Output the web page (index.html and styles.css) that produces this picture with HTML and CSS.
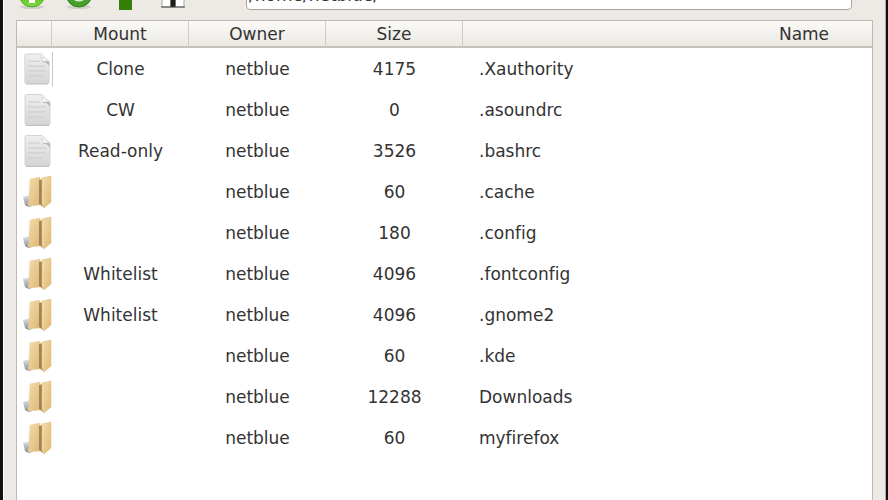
FILE: index.html
```html
<!DOCTYPE html>
<html lang="en">
<head>
    <meta charset="UTF-8">
    <meta name="viewport" content="width=device-width, initial-scale=1.0">
    <title>File Browser</title>
    <link rel="stylesheet" href="styles.css">
</head>
<body>
    <!-- Shared icons -->
    <svg class="sprite" aria-hidden="true">
        <defs>
            <linearGradient id="paper" x1="0" y1="0" x2="0" y2="1">
                <stop offset="0" stop-color="#efefef"/>
                <stop offset="1" stop-color="#d4d4d4"/>
            </linearGradient>
            <linearGradient id="tan" x1="0" y1="0" x2="1" y2="1">
                <stop offset="0" stop-color="#f3dcac"/>
                <stop offset="1" stop-color="#dfb873"/>
            </linearGradient>
            <linearGradient id="steel" x1="0" y1="0" x2="0" y2="1">
                <stop offset="0" stop-color="#e4e4e4"/>
                <stop offset="1" stop-color="#868b91"/>
            </linearGradient>
            <linearGradient id="green" x1="0" y1="0" x2="0" y2="1">
                <stop offset="0" stop-color="#3e9a12"/>
                <stop offset="1" stop-color="#7fdc3c"/>
            </linearGradient>
            <symbol id="file" viewBox="0 0 32 34">
                <path d="M5.500 1.500H21l8 8V30.500q0 1.500-1.500 1.500h-22Q4 32 4 30.500V3Q4 1.500 5.500 1.500z" fill="url(#paper)" stroke="#d4d4d4"/>
                <path d="M7 9h12M7 14h18M7 19h18M7 24h15" stroke="#cbcbcb" fill="none"/>
                <path d="M20 4q3 3 2 6 4-1 7 4V9z" fill="#b4b4b4"/>
                <path d="M20 2q3 3 2 7 4-1 7 1z" fill="#f6f6f6"/>
                <path d="M5 32.500h23" stroke="#bdbdbd"/>
            </symbol>
            <symbol id="folder" viewBox="0 0 32 34">
                <path d="M2 22l7-2 2 11q-4 2-7-1-1-4-2-8z" fill="url(#steel)"/>
                <path d="M9 4l10-2v28l-10 1q-2 0-2-2 2-3 1-8z" fill="url(#tan)" stroke="#ead09c" stroke-width=".5"/>
                <path d="M18 5l4-1v28l-4-3z" fill="#a08657"/>
                <path d="M21 3l9-2V27l-7 6-2-3z" fill="url(#tan)" stroke="#dcb878" stroke-width=".5"/>
                <path d="M22 5v24" stroke="#f3dca8"/>
            </symbol>
        </defs>
    </svg>

    <main class="window">
        <div class="toolbar">
            <button type="button" aria-label="Add">
                <svg viewBox="0 0 32 32">
                    <ellipse cx="16" cy="28" rx="12" ry="2" fill="#d0cec8"/>
                    <circle cx="16" cy="15" r="13" fill="url(#green)" stroke="#55a82b"/>
                    <path d="M13 5h6v6h6v6h-6v7h-6v-7H7v-6h6z" fill="#fff"/>
                </svg>
            </button>
            <button type="button" aria-label="Refresh">
                <svg viewBox="0 0 32 32">
                    <ellipse cx="16" cy="28" rx="12" ry="2" fill="#d0cec8"/>
                    <circle cx="16" cy="15" r="13" fill="#46a02a" stroke="#318018"/>
                    <path d="M11 12q-2 9 5 9 6 0 6-7" fill="none" stroke="#d9f0cf" stroke-width="3"/>
                </svg>
            </button>
            <button type="button" aria-label="Up">
                <svg viewBox="0 0 32 32">
                    <path d="M16 2L4 15h5v16h13V15h6z" fill="#367f08"/>
                </svg>
            </button>
            <button type="button" aria-label="Home">
                <svg viewBox="0 0 32 32">
                    <path d="M5 14L16 3l11 11v14H5z" fill="#fff" stroke="#aaa"/>
                    <path d="M13 13h6v15h-6z" fill="#77736b"/>
                    <path d="M14 13h4v15h-4z" fill="#1c1c18"/>
                    <path d="M4 28h24" stroke="#444"/>
                </svg>
            </button>
            <input class="path" type="text" aria-label="Path" value="/home/netblue/">
        </div>

        <div class="file-list">
            <table>
                <colgroup>
                    <col class="col-icon">
                    <col class="col-data">
                    <col class="col-data">
                    <col class="col-data">
                    <col class="col-name">
                </colgroup>
                <thead>
                    <tr>
                        <th aria-label="Type"></th>
                        <th>Mount</th>
                        <th>Owner</th>
                        <th>Size</th>
                        <th>Name</th>
                    </tr>
                </thead>
                <tbody>
                    <tr class="current">
                        <td><svg><use href="#file"/></svg></td>
                        <td>Clone</td>
                        <td>netblue</td>
                        <td>4175</td>
                        <td>.Xauthority</td>
                    </tr>
                    <tr>
                        <td><svg><use href="#file"/></svg></td>
                        <td>CW</td>
                        <td>netblue</td>
                        <td>0</td>
                        <td>.asoundrc</td>
                    </tr>
                    <tr>
                        <td><svg><use href="#file"/></svg></td>
                        <td>Read-only</td>
                        <td>netblue</td>
                        <td>3526</td>
                        <td>.bashrc</td>
                    </tr>
                    <tr>
                        <td><svg><use href="#folder"/></svg></td>
                        <td></td>
                        <td>netblue</td>
                        <td>60</td>
                        <td>.cache</td>
                    </tr>
                    <tr>
                        <td><svg><use href="#folder"/></svg></td>
                        <td></td>
                        <td>netblue</td>
                        <td>180</td>
                        <td>.config</td>
                    </tr>
                    <tr>
                        <td><svg><use href="#folder"/></svg></td>
                        <td>Whitelist</td>
                        <td>netblue</td>
                        <td>4096</td>
                        <td>.fontconfig</td>
                    </tr>
                    <tr>
                        <td><svg><use href="#folder"/></svg></td>
                        <td>Whitelist</td>
                        <td>netblue</td>
                        <td>4096</td>
                        <td>.gnome2</td>
                    </tr>
                    <tr>
                        <td><svg><use href="#folder"/></svg></td>
                        <td></td>
                        <td>netblue</td>
                        <td>60</td>
                        <td>.kde</td>
                    </tr>
                    <tr>
                        <td><svg><use href="#folder"/></svg></td>
                        <td></td>
                        <td>netblue</td>
                        <td>12288</td>
                        <td>Downloads</td>
                    </tr>
                    <tr>
                        <td><svg><use href="#folder"/></svg></td>
                        <td></td>
                        <td>netblue</td>
                        <td>60</td>
                        <td>myfirefox</td>
                    </tr>
                </tbody>
            </table>
        </div>
    </main>
</body>
</html>
```

FILE: styles.css
```css
* {
    box-sizing: border-box;
}

body {
    margin: 0;
    background-color: #111;
    color: #333;
    font-family: "DejaVu Sans", sans-serif;
    font-size: 17px;
    font-variant-ligatures: none;
    overflow: hidden;
}

.sprite {
    display: block;
    width: 0;
    height: 0;
}

.window {
    display: flex;
    flex-direction: column;
    height: 100vh;
    margin: 0 2px 0 3px;
    padding: 0 12px;
    background-color: #edeae5;
    border-left: 1px solid #fff;
    border-right: 1px solid #aaa;
}

.toolbar {
    display: flex;
    flex: none;
    align-items: center;
    gap: 15px;
    height: 34px;
    margin-top: -22px;
    margin-bottom: 8px;
}

.toolbar button {
    flex: none;
    width: 32px;
    height: 32px;
    padding: 0;
    border: none;
    background: none;
}

.toolbar svg {
    display: block;
    width: 32px;
    height: 32px;
}

.path {
    flex: 1;
    min-width: 0;
    height: 30px;
    margin: 0 21px 0 42px;
    padding: 0 2px;
    border: 1px solid #aaa69f;
    border-radius: 4px;
    background-color: #fff;
    color: #333;
    font: inherit;
}

.file-list {
    flex: 1;
    overflow: hidden;
    background-color: #fff;
    border: 1px solid #bdb9b4;
    border-bottom: none;
}

table {
    width: 1129px;
    table-layout: fixed;
    border-collapse: separate;
    border-spacing: 0;
}

.col-icon {
    width: 35px;
}

.col-data {
    width: 137px;
}

th {
    height: 27px;
    padding: 0;
    background: linear-gradient(#fbfaf7, #ebe8e4);
    border-right: 1px solid #cfccc7;
    border-bottom: 2px solid #c6c2bc;
    font-weight: normal;
}

td {
    height: 41px;
    padding: 0;
    text-align: center;
}

td:last-child {
    padding-left: 16px;
    text-align: left;
}

td svg {
    display: block;
    width: 32px;
    height: 34px;
    margin-left: 4px;
}

.current svg {
    box-sizing: content-box;
    width: 31px;
    border-right: 1px solid #b9ccd6;
}
```
